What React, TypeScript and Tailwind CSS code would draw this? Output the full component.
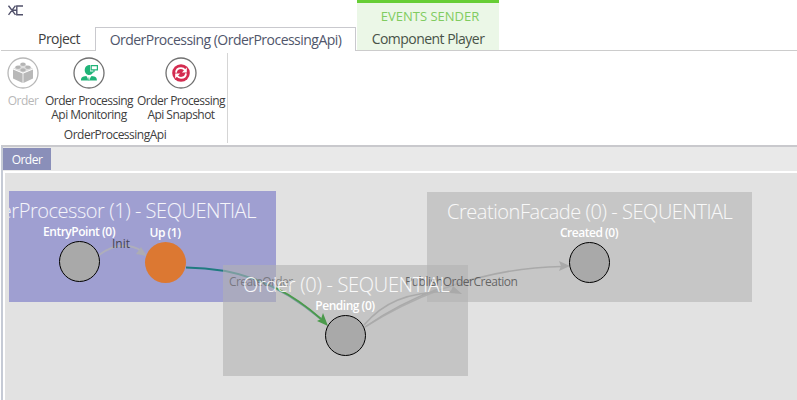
import type { ReactNode } from "react";

function RibbonButton({ icon, lines, className }: { icon: ReactNode; lines: string[]; className: string }) {
  return (
    <button className={`flex shrink-0 flex-col items-center text-[12px] leading-[14px] tracking-[-0.53px] whitespace-nowrap ${className}`}>
      <span className="mb-[5px] size-8 shrink-0">{icon}</span>
      {lines.map((line) => (
        <span key={line}>{line}</span>
      ))}
    </button>
  );
}

function CubeIcon() {
  return (
    <svg viewBox="0 0 32 32" className="size-8">
      <circle cx="16" cy="16" r="15" fill="#fff" stroke="#b8b8b8" strokeWidth="1.3" />
      <path d="M6 12.5 15.6 16.5V26L6 21.5ZM26 12.5 16.4 16.5V26L26 21.5Z" fill="#b8b8b8" />
      <path d="M6 11.5 16 6.5 26 11.5 16 15.7Z" fill="#dedede" />
      <g fill="#b4b4b4">
        <ellipse cx="16" cy="7.3" rx="2.8" ry="1.7" />
        <ellipse cx="11" cy="10.2" rx="2.8" ry="1.7" />
        <ellipse cx="21" cy="10.2" rx="2.8" ry="1.7" />
        <ellipse cx="16" cy="13" rx="2.8" ry="1.7" />
      </g>
    </svg>
  );
}

function MonitorIcon() {
  return (
    <svg viewBox="0 0 32 32" className="size-8">
      <circle cx="16" cy="16" r="15" fill="#fff" stroke="#707070" strokeWidth="1.3" />
      <path d="M16 8a4.5 5 0 0 0-4.3 5c0 2.7 1.8 5 4.3 5s4-1.7 4.3-3.6h-3.2V8Z" fill="#20b478" />
      <path d="M18.2 8.6h6.2v4.3h-6.2ZM21 13v1.7l-2.2.8" fill="#fff" stroke="#20b478" strokeWidth="1.2" />
      <path d="M8 23.4c0-3 1.4-3.7 5.3-4.3l2.6 3.2 2.7-3.2c4 .6 5.3 1.3 5.3 4.3Z" fill="#20b478" />
      <path d="M14.4 19.2h3l-.6 4.2H15Z" fill="#fff" />
      <path d="m15.9 19.7.8 3.7h-1.6Z" fill="#20b478" />
    </svg>
  );
}

function RefreshIcon() {
  return (
    <svg viewBox="0 0 32 32" className="size-8">
      <circle cx="16" cy="16" r="15" fill="#fff" stroke="#707070" strokeWidth="1.3" />
      <circle cx="16" cy="16" r="8.8" fill="#d42c50" />
      <g fill="none" stroke="#fff" strokeWidth="1.8">
        <path d="M11 15.6c.2-2.7 2.2-4.4 5-4.4 1.8 0 3.2.8 4 2" />
        <path d="M21 16.4c-.2 2.7-2.2 4.4-5 4.4-1.8 0-3.2-.8-4-2" />
      </g>
      <path d="M21.8 10.6v4.8h-4.9ZM10.2 21.4v-4.8h4.9Z" fill="#fff" />
    </svg>
  );
}

function Panel({ title, className, titleClass }: { title: string; className: string; titleClass: string }) {
  return (
    <div className={`absolute overflow-hidden ${className}`}>
      <PanelTitle className={titleClass}>{title}</PanelTitle>
    </div>
  );
}

function PanelTitle({ children, className }: { children: ReactNode; className: string }) {
  return (
    <span className={`absolute text-[20px] leading-6 font-light whitespace-nowrap text-white/90 ${className}`}>{children}</span>
  );
}

function StateNode({ label, className, circleClass }: { label: string; className: string; circleClass: string }) {
  return (
    <div className={`absolute flex w-[90px] flex-col items-center ${className}`}>
      <span className="h-[17px] pt-px text-[12px] leading-[14px] font-semibold tracking-[-0.48px] whitespace-nowrap text-white">{label}</span>
      <span className={`size-[41px] rounded-full ${circleClass}`} />
    </div>
  );
}

function Diagram() {
  return (
    <div className="relative min-h-0 flex-1 overflow-hidden bg-[#e2e2e2]">
      <Panel
        title="OrderProcessor (1) - SEQUENTIAL"
        className="top-[18px] left-1 h-[111px] w-[267px] bg-[#9f9fd1]"
        titleClass="top-[8px] right-[20px] tracking-[-0.45px]"
      />
      <Panel
        title="CreationFacade (0) - SEQUENTIAL"
        className="top-[19px] left-[422px] h-[110px] w-[325px] bg-[#c6c6c6]"
        titleClass="top-[8px] left-[20px] tracking-[-0.45px]"
      />
      <svg className="absolute top-0 left-0 h-[227px] w-[792px]" viewBox="5 173 792 227" fill="none" strokeWidth="1.6">
        <path d="M99 255Q121 239 142 251" stroke="#aeaebb" strokeWidth="2" />
        <path d="m147 256-11-2 5-7Z" fill="#acacb4" />
        <path d="M186 267.5C240 268 279 284 321 319" stroke="#207b80" strokeWidth="2" />
        <path d="M365 327C400 305 470 268 562 266.5" stroke="#a9a9a9" />
        <path d="m570 266-11-5 2 5-2 5Z" fill="#a9a9a9" />
      </svg>
      <div className="absolute top-[92px] left-[218px] h-[111px] w-[245px] bg-[#b2b2b2]/60" />
      <svg className="absolute top-0 left-0 h-[227px] w-[792px]" viewBox="5 173 792 227" fill="none">
        <path d="M276 288Q300 300 321 319" stroke="#4b9a4b" strokeWidth="1.8" />
        <path d="m328 326-11-5 4-2 2-6Z" fill="#4b9a4b" />
        <path d="M364 325C382 304 405 291 453 291.5M365 327Q398 304 438 289" stroke="#aaa" strokeWidth="1.5" />
        <path d="m462 294-12-1 3-7Z" fill="#a9a9a9" />
      </svg>
      <span className="absolute top-[64px] left-[107px] text-[12px] leading-[14px] text-[#464653]">Init</span>
      <span className="absolute top-[102px] left-[224px] text-[12px] leading-[14px] tracking-[-0.6px] text-[#555]/60">CreateOrder</span>
      <span className="absolute top-[102px] left-[400px] text-[12px] leading-[14px] tracking-[-0.48px] text-[#444]/75">PublishOrderCreation</span>
      <PanelTitle className="top-[100px] left-[238px] tracking-[-0.3px]">Order (0) - SEQUENTIAL</PanelTitle>
      <StateNode label="EntryPoint (0)" className="top-[51px] left-[29px]" circleClass="border border-black bg-[#a9a9a9]" />
      <StateNode label="Up (1)" className="top-[52px] left-[115px]" circleClass="bg-[#dc7832]" />
      <StateNode label="Pending (0)" className="top-[125px] left-[295px]" circleClass="border border-black bg-[#a9a9a9]" />
      <StateNode label="Created (0)" className="top-[52px] left-[539px]" circleClass="border border-black bg-[#a9a9a9]" />
    </div>
  );
}

export default function App() {
  return (
    <div className="flex h-[400px] w-[797px] flex-col overflow-hidden bg-white font-['Open_Sans','Noto_Sans',sans-serif] text-[#404040]">
      <header className="flex h-[51px] shrink-0 pl-px text-[14px] leading-5 tracking-[-0.53px]">
        <div className="flex w-[94px] flex-col justify-between border-b border-[#ccc] pt-[5px] pb-px">
          <svg className="ml-[7px] h-[11px] w-[16px]" viewBox="0 0 16 11" fill="none" stroke="#50506a" strokeWidth="1.4">
            <path d="m.5.7 7 9.2M7.5.7l-7 9.2M15 1H8.8v8.7H15M5 5.3h3.8" />
          </svg>
          <span className="ml-[37px]">Project</span>
        </div>
        <div className="mt-[27px] flex w-[261px] justify-center border-x border-t border-[#c9c9ce] pt-[2px] whitespace-nowrap text-[#50566b]">
          <span>OrderProcessing (OrderProcessingApi)</span>
        </div>
        <div className="w-px border-b border-[#ccc]" />
        <div className="flex w-[142px] flex-col items-center border-t-[3px] border-b border-t-[#66ce35] border-b-[#ccc] bg-[#ebf7e7] pt-[3px] whitespace-nowrap">
          <span className="pl-[4px] text-[13px] tracking-normal text-[#80cc60]">EVENTS SENDER</span>
          <span className="mt-[3px] text-[#485348]">Component Player</span>
        </div>
        <div className="flex-1 border-b border-[#ccc]" />
      </header>
      <section className="flex h-[94px] shrink-0 pt-[2px]">
        <div className="flex h-[90px] w-[228px] flex-col border-r border-[#d5d5d5] pt-[4px]">
          <div className="flex h-[71px]">
            <RibbonButton icon={<CubeIcon />} lines={["Order"]} className="w-[46px] text-[#b8b8b8]" />
            <RibbonButton icon={<MonitorIcon />} lines={["Order Processing", "Api Monitoring"]} className="w-[86px]" />
            <RibbonButton icon={<RefreshIcon />} lines={["Order Processing", "Api Snapshot"]} className="ml-[4px] w-[90px]" />
          </div>
          <span className="pl-[3px] text-center text-[12px] leading-[14px] tracking-[-0.5px]">OrderProcessingApi</span>
        </div>
      </section>
      <main className="ml-px flex min-h-0 flex-1 flex-col border-t-2 border-l-2 border-t-[#c9c9cd] border-l-[#c5cad5]">
        <nav className="flex h-[24px] shrink-0 bg-[#e9e9e9] pt-px">
          <span className="flex h-[22px] w-[48px] items-center justify-center bg-[#8a8fb9] pt-px text-[12px] tracking-[-0.5px] text-white">Order</span>
        </nav>
        <div className="flex min-h-0 flex-1 border-t-2 border-l-2 border-white">
          <Diagram />
        </div>
      </main>
    </div>
  );
}
